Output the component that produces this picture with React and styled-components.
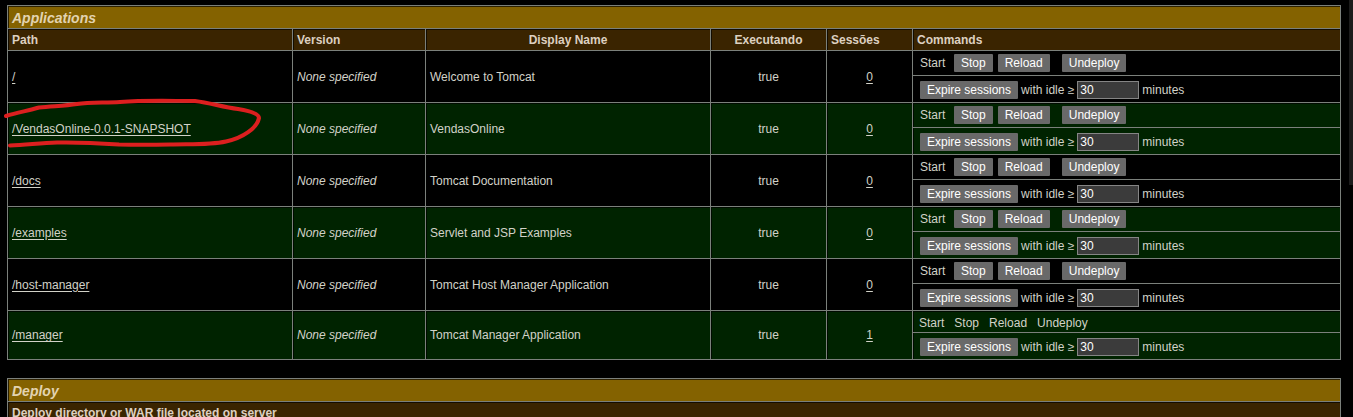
import React from "react";
import styled, { createGlobalStyle } from "styled-components";

const GlobalStyle = createGlobalStyle`
  *, *::before, *::after { box-sizing: border-box; }
  html { background: #000; overflow: hidden; }
  body {
    margin: 0;
    background: #000;
    color: #d2d2c8;
    font-family: "Liberation Sans", Arial, sans-serif;
    font-size: 12px;
    line-height: 16px;
  }
`;

const line = "1px solid #7b807b";

const Page = styled.div`
  display: flex;
  align-items: flex-start;
  height: 100vh;
  overflow: hidden;
`;

const Main = styled.main`
  flex: 1;
  min-width: 0;
  position: relative;
  padding: 5px 8px 0 7px;
`;

const ScrollThumb = styled.div`
  width: 4px;
  height: 185px;
  background: #1c1c1c;
`;

const Table = styled.table`
  width: 100%;
  table-layout: fixed;
  border-spacing: 0;
  border-right: ${line};
  border-bottom: ${line};
  margin-bottom: 18px;
`;

const Col = styled.col`
  width: ${(p) => p.$width};
`;

const Cell = styled.td`
  border-top: ${line};
  border-left: ${line};
  box-shadow: inset 1px 1px #000a;
  padding: 0 4px;
  text-align: ${(p) => p.$align || "left"};
`;

const Title = styled(Cell)`
  height: 23px;
  padding-top: 2px;
  background: #846200;
  color: #e2d3b0;
  font-size: 14px;
  font-weight: bold;
  font-style: italic;
`;

const Heading = styled(Cell)`
  height: 22px;
  background: #3a2400;
  color: #ddd0c0;
  font-weight: bold;
`;

const Row = styled.tr`
  background: ${(p) => (p.$shaded ? "#002300" : "#000")};
`;

const Commands = styled(Cell)`
  padding: 0;
`;

const Actions = styled.div`
  display: flex;
  align-items: center;
  height: ${(p) => (p.$compact ? "21px" : "24px")};
  padding-top: ${(p) => (p.$compact ? "2px" : "0")};
  padding-left: ${(p) => (p.$compact ? "6px" : "7px")};
  gap: ${(p) => (p.$compact ? "10px" : "0")};
`;

const Expire = styled.form`
  display: flex;
  align-items: center;
  height: 27px;
  border-top: ${line};
  padding: 2px 0 0 7px;
  gap: 3px;
`;

const Start = styled.span`
  width: 34px;
`;

const Button = styled.button`
  height: 18px;
  padding: 0 7px;
  border: 0;
  border-radius: 1px;
  background: #696969;
  color: #fff;
  font: inherit;
  line-height: 18px;
  white-space: nowrap;
  margin-right: ${(p) => p.$after || "0"};
`;

const IdleLabel = styled.label`
  display: flex;
  align-items: center;
  gap: 3px;
`;

const IdleInput = styled.input`
  width: 62px;
  height: 18px;
  padding: 0 2px;
  border: 1px solid #858585;
  background: #3b3b3b;
  color: #fff;
  font: inherit;
`;

const Link = styled.a`
  color: inherit;
  text-decoration: underline;
  text-underline-offset: 2px;
`;

const Marker = styled.svg`
  position: absolute;
  left: 0;
  top: 94px;
  width: 270px;
  height: 60px;
  pointer-events: none;
`;

const apps = [
  { path: "/", name: "Welcome to Tomcat", sessions: 0 },
  { path: "/VendasOnline-0.0.1-SNAPSHOT", name: "VendasOnline", sessions: 0 },
  { path: "/docs", name: "Tomcat Documentation", sessions: 0 },
  { path: "/examples", name: "Servlet and JSP Examples", sessions: 0 },
  { path: "/host-manager", name: "Tomcat Host Manager Application", sessions: 0 },
  { path: "/manager", name: "Tomcat Manager Application", sessions: 1, locked: true },
];

const columns = [
  { label: "Path", width: "285px" },
  { label: "Version", width: "133px" },
  { label: "Display Name", width: "285px", align: "center" },
  { label: "Executando", width: "116px", align: "center" },
  { label: "Sessões", width: "86px" },
  { label: "Commands", width: "auto" },
];

function AppCommands({ locked }) {
  return (
    <Commands>
      {locked ? (
        <Actions $compact>
          <span>Start</span>
          <span>Stop</span>
          <span>Reload</span>
          <span>Undeploy</span>
        </Actions>
      ) : (
        <Actions>
          <Start>Start</Start>
          <Button type="button" $after="5px">Stop</Button>
          <Button type="button" $after="12px">Reload</Button>
          <Button type="button">Undeploy</Button>
        </Actions>
      )}
      <Expire onSubmit={(e) => e.preventDefault()}>
        <Button type="submit">Expire sessions</Button>
        <IdleLabel>
          with idle ≥
          <IdleInput type="text" defaultValue="30" />
          minutes
        </IdleLabel>
      </Expire>
    </Commands>
  );
}

export default function App() {
  return (
    <Page>
      <GlobalStyle />
      <Main>
        <Table>
          <colgroup>
            {columns.map((c) => (
              <Col key={c.label} $width={c.width} />
            ))}
          </colgroup>
          <thead>
            <tr>
              <Title as="th" colSpan={6}>Applications</Title>
            </tr>
            <tr>
              {columns.map((c) => (
                <Heading as="th" key={c.label} $align={c.align}>{c.label}</Heading>
              ))}
            </tr>
          </thead>
          <tbody>
            {apps.map((app, i) => (
              <Row key={app.path} $shaded={i % 2 === 1}>
                <Cell><Link href="#">{app.path}</Link></Cell>
                <Cell><em>None specified</em></Cell>
                <Cell>{app.name}</Cell>
                <Cell $align="center">true</Cell>
                <Cell $align="center"><Link href="#">{app.sessions}</Link></Cell>
                <AppCommands locked={app.locked} />
              </Row>
            ))}
          </tbody>
        </Table>
        <Table>
          <thead>
            <tr><Title as="th">Deploy</Title></tr>
            <tr><Heading as="th">Deploy directory or WAR file located on server</Heading></tr>
          </thead>
        </Table>
        <Marker viewBox="0 94 270 60" fill="none" stroke="#dc1f1f" strokeWidth="4" strokeLinecap="round" strokeLinejoin="round" aria-hidden="true">
          <path d="M6 116C18 112 28 111 39 107.500C53 106 64 106 77 104C90 102 105 103 120 102C145 100 170 101 195 101C211 103 222 107 238 109C250 111 259 114 259 118C257 128 243 138 226 141.500C210 145 194 144 170 144.500C150 145 135 145 119 144.500C97 143 80 142 57 142.500C40 143 26 145 10 145.500" />
        </Marker>
      </Main>
      <ScrollThumb />
    </Page>
  );
}
